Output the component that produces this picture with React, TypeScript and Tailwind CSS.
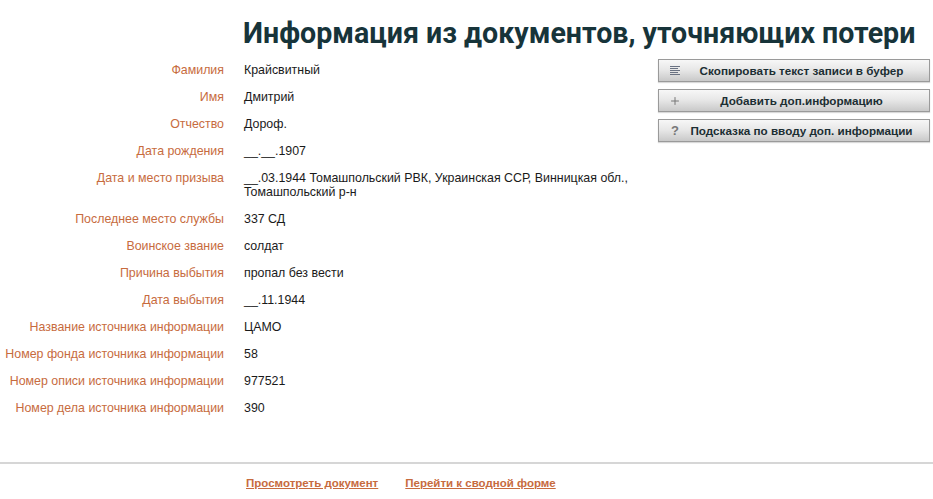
import { Plus } from "lucide-react";

const rows: [string, string][] = [
  ["Фамилия", "Крайсвитный"],
  ["Имя", "Дмитрий"],
  ["Отчество", "Дороф."],
  ["Дата рождения", "__.__.1907"],
  ["Дата и место призыва", "__.03.1944 Томашпольский РВК, Украинская ССР, Винницкая обл., Томашпольский р-н"],
  ["Последнее место службы", "337 СД"],
  ["Воинское звание", "солдат"],
  ["Причина выбытия", "пропал без вести"],
  ["Дата выбытия", "__.11.1944"],
  ["Название источника информации", "ЦАМО"],
  ["Номер фонда источника информации", "58"],
  ["Номер описи источника информации", "977521"],
  ["Номер дела источника информации", "390"],
];

function LinesIcon() {
  return (
    <svg width="12" height="12" viewBox="0 0 12 12" className="text-gray-500">
      <path d="M1 1.5h10M1 3.5h8M1 5.5h10M1 7.5h8M1 9.5h10" stroke="currentColor" strokeWidth="1" />
    </svg>
  );
}

function ToolButton({ icon, label }: { icon: React.ReactNode; label: string }) {
  return (
    <button className="flex h-[23px] w-[272px] items-center border border-[#9a9a9a] bg-gradient-to-b from-[#f7f7f7] via-[#e6e6e6] to-[#c9c9c9] pl-[9px] pr-2 text-left shadow-[0_1px_1px_rgba(0,0,0,0.15)]">
      <span className="flex w-[14px] items-center justify-center text-[#777]">{icon}</span>
      <span className="flex-1 text-center text-[11.7px] font-bold text-[#1c2e33]">{label}</span>
    </button>
  );
}

export default function App() {
  return (
    <div className="min-h-[499px] w-[933px] bg-white font-['Liberation_Sans',Arial,sans-serif]">
      <h1 className="pl-[243px] pt-[14px] font-['Roboto',sans-serif] text-[28.6px] font-bold leading-[38px] text-[#17343a]">
        Информация из документов, уточняющих потери
      </h1>

      <div className="flex pt-[6px]">
        <div className="grid w-[658px] grid-cols-[224px_400px] gap-x-[20px] gap-y-[13px] pt-[5px] text-[12.4px] leading-[14px]">
          {rows.map(([label, value]) => (
            <div key={label} className="contents">
              <div className="text-right text-[#c76b3e]">{label}</div>
              <div className="text-[#1a1a1a]">{value}</div>
            </div>
          ))}
        </div>

        <div className="flex flex-col gap-[7px] pt-[1px]">
          <ToolButton icon={<LinesIcon />} label="Скопировать текст записи в буфер" />
          <ToolButton icon={<Plus size={12} strokeWidth={2} />} label="Добавить доп.информацию" />
          <ToolButton icon={<span className="text-[13px] font-bold leading-none">?</span>} label="Подсказка по вводу доп. информации" />
        </div>
      </div>

      <div className="mt-[47px] border-t-2 border-[#d6d6d6]" />

      <div className="flex gap-[27px] pl-[246px] pt-[11px] text-[11.5px] font-bold text-[#c76b3e]">
        <a href="#" className="underline">Просмотреть документ</a>
        <a href="#" className="underline">Перейти к сводной форме</a>
      </div>
    </div>
  );
}
